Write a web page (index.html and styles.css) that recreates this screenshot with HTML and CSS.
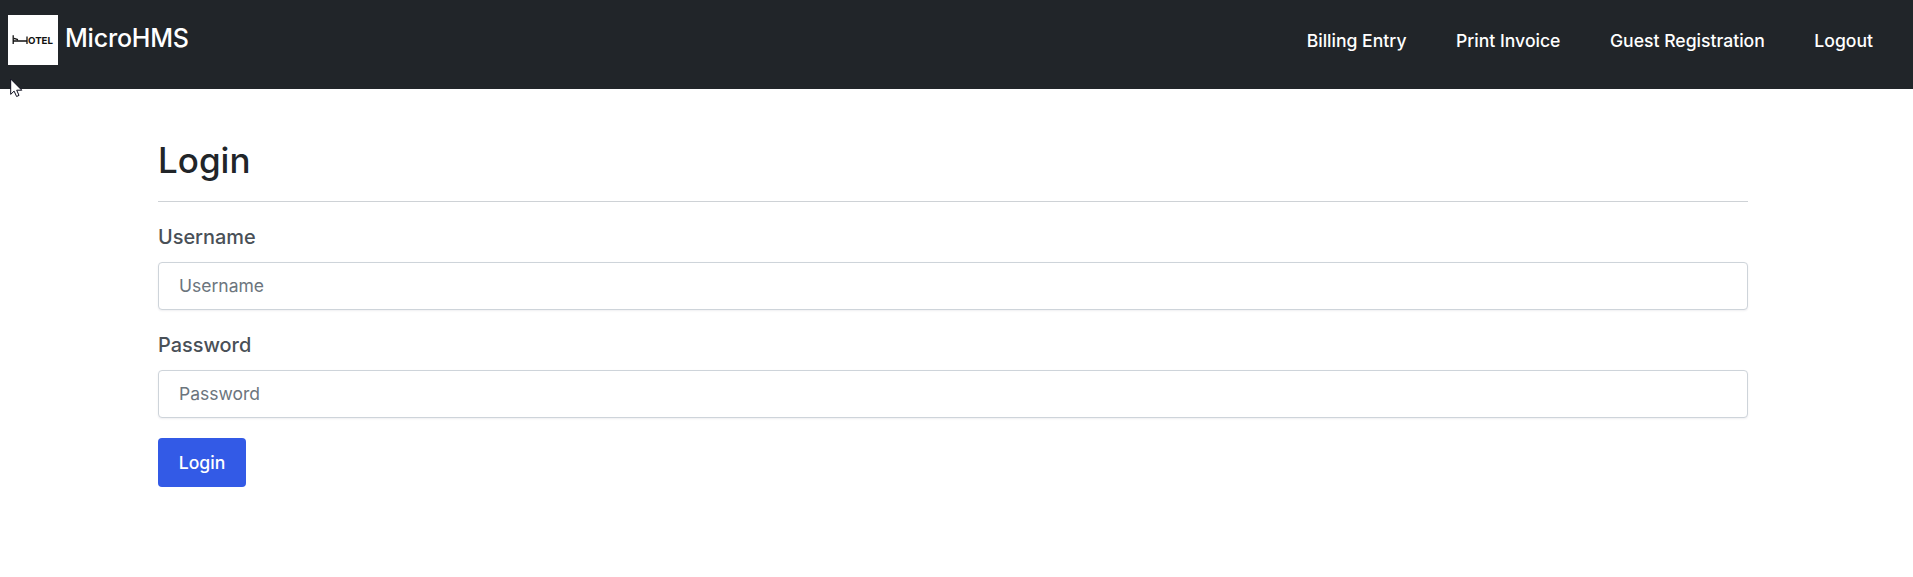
FILE: index.html
```html
<!DOCTYPE html>
<html lang="en">
<head>
<meta charset="utf-8">
<title>MicroHMS</title>
<link rel="stylesheet" href="styles.css">
</head>
<body>
<header class="navbar">
  <a class="brand">
    <svg class="logo" width="50" height="50" viewBox="0 0 50 50">
      <rect width="50" height="50" fill="#fff"/>
      <path d="M5.2 20.3V29M5.2 26H19M19 21.5V29M6 23.3L10 24.6" fill="none" stroke="#111" stroke-width="1.3"/>
      <text class="logo-text" x="20" y="28.6" textLength="25" lengthAdjust="spacingAndGlyphs">OTEL</text>
    </svg>
    <span class="brand-name">MicroHMS</span>
  </a>
  <nav class="nav">
    <a class="nav-link">Billing Entry</a>
    <a class="nav-link">Print Invoice</a>
    <a class="nav-link">Guest Registration</a>
    <a class="nav-link">Logout</a>
  </nav>
</header>
<main class="container">
  <h1 class="title">Login</h1>
  <form>
    <label class="label" for="username">Username</label>
    <input class="input" id="username" type="text" placeholder="Username">
    <label class="label" for="password">Password</label>
    <input class="input" id="password" type="password" placeholder="Password">
    <button class="button" type="button">Login</button>
  </form>
</main>
<svg class="cursor" width="13" height="20" viewBox="0 0 13 20">
  <path d="M.7 1V16.4L4.1 13.1L6.6 18.5L9 17.4L6.7 12.2H11.8Z" fill="#fff" stroke="#0b0b1c" stroke-width="1"/>
</svg>
</body>
</html>
```
FILE: styles.css
```css
* { box-sizing: border-box; }
body {
  margin: 0;
  background: #fff;
  color: #212529;
  font-family: Inter, "Liberation Sans", sans-serif;
}
.navbar {
  display: flex;
  justify-content: space-between;
  height: 89px;
  padding: 15px 40px 0 8px;
  background: #212529;
  color: #fff;
}
.brand { display: flex; gap: 7px; }
.logo { display: block; }
.logo-text {
  font-family: Inter, sans-serif;
  font-size: 9.5px;
  font-weight: 700;
  fill: #111;
}
.brand-name {
  font-size: 25px;
  font-weight: 500;
  line-height: 46px;
  letter-spacing: -.2px;
}
.nav { display: flex; gap: 49.5px; }
.nav-link {
  font-size: 17.6px;
  font-weight: 500;
  line-height: 52px;
}
.container {
  width: 1590px;
  margin-left: 158px;
  padding-top: 49px;
}
.title {
  height: 64px;
  margin: 0 0 21px;
  border-bottom: 1px solid #ced2d6;
  font-size: 35px;
  font-weight: 500;
  line-height: 44px;
}
.label {
  display: block;
  margin-bottom: 11px;
  color: #495057;
  font-size: 19.9px;
  font-weight: 500;
  line-height: 28px;
}
.input {
  display: block;
  width: 100%;
  height: 48px;
  margin: 0 0 21px;
  padding: 0 20px 1px;
  border: 1px solid #ced4da;
  border-radius: 4px;
  box-shadow: 0 1px 2px rgba(50, 50, 71, .08);
  color: #495057;
  font-family: inherit;
  font-size: 17.5px;
}
.input::placeholder { color: #6c757d; }
.button {
  display: block;
  width: 88px;
  height: 49px;
  margin-top: -1px;
  padding: 0;
  border: 0;
  border-radius: 4px;
  background: #335ae6;
  color: #fff;
  font-family: inherit;
  font-size: 17.6px;
  font-weight: 500;
}
.cursor {
  position: absolute;
  left: 10px;
  top: 78px;
}
```
